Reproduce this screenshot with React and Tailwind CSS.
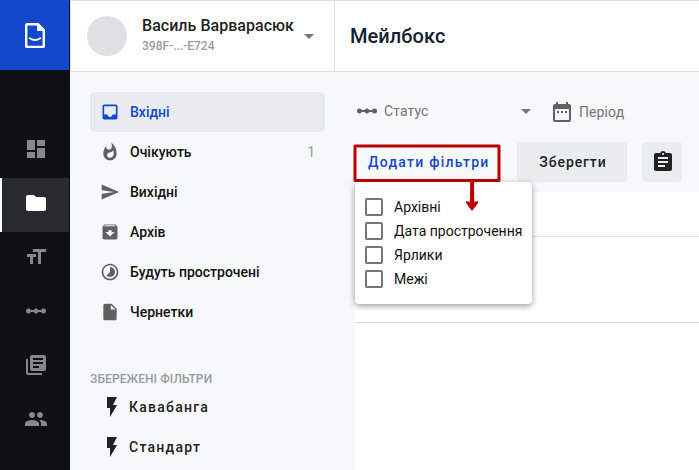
import {
  MdDashboard, MdFolder, MdFormatSize, MdLinearScale, MdLibraryBooks, MdPeople,
  MdInbox, MdWhatshot, MdSend, MdArchive, MdTimelapse, MdInsertDriveFile,
  MdFlashOn, MdDateRange, MdAssignment, MdArrowDropDown,
} from "react-icons/md";

const railItems = [
  { Icon: MdDashboard },
  { Icon: MdFolder, active: true },
  { Icon: MdFormatSize },
  { Icon: MdLinearScale },
  { Icon: MdLibraryBooks },
  { Icon: MdPeople },
];

const folders = [
  { label: "Вхідні", Icon: MdInbox, active: true },
  { label: "Очікують", Icon: MdWhatshot, count: 1 },
  { label: "Вихідні", Icon: MdSend },
  { label: "Архів", Icon: MdArchive },
  { label: "Будуть прострочені", Icon: MdTimelapse },
  { label: "Чернетки", Icon: MdInsertDriveFile },
];

const savedFilters = ["Кавабанга", "Стандарт"];
const filterOptions = ["Архівні", "Дата прострочення", "Ярлики", "Межі"];

function Logo() {
  return (
    <svg width="20" height="26" viewBox="0 0 20 26" fill="none">
      <path d="M2.2 1.2H13L18.8 7V23.2Q18.8 23.9 18.1 23.9H1.9Q1.2 23.9 1.2 23.2V2.2Q1.2 1.2 2.2 1.2Z" stroke="#fff" strokeWidth="2.4" strokeLinejoin="round" />
      <path d="M12 1L19 8H13Q12 8 12 7Z" fill="#fff" />
      <path d="M4.8 15.2Q10 19 15.2 15.2" stroke="#fff" strokeWidth="2" strokeLinecap="round" />
    </svg>
  );
}

function Rail() {
  return (
    <nav className="flex w-[70px] shrink-0 flex-col border-r border-[#0c1015] bg-[#0d1116]">
      <div className="mb-[54px] flex h-[70px] items-center justify-center bg-[#1348cc] pt-px pl-px">
        <Logo />
      </div>
      {railItems.map(({ Icon, active }, i) => (
        <div
          key={i}
          className={`flex h-[54px] items-center justify-center border-l-2 pb-1 ${
            active ? "border-white bg-[#272a2f] text-white" : "border-transparent text-[#86888a]"
          }`}
        >
          <Icon size={24} />
        </div>
      ))}
    </nav>
  );
}

function Header() {
  return (
    <header className="flex h-[72px] border-y border-l border-[#dcdfe2] bg-white">
      <div className="flex w-[264px] items-center border-r border-[#dcdfe2] pl-4">
        <div className="size-10 rounded-full bg-[#dde1e4]" />
        <div className="ml-[15px] w-[155px] whitespace-nowrap">
          <div className="text-[16px] font-medium leading-5 tracking-[0.03px] text-[#222]">Василь Варварасюк</div>
          <div className="text-[12px] font-medium leading-5 text-[#959ca5]">398F-...-E724</div>
        </div>
        <MdArrowDropDown size={24} className="text-[#757575]" />
      </div>
      <h1 className="flex items-center pl-[15px] text-[20px] font-medium tracking-[0.05px] text-[#14202e]">Мейлбокс</h1>
    </header>
  );
}

function Sidebar() {
  return (
    <aside className="w-[285px] shrink-0 bg-[#f7f8fa] pl-5 pr-[30px] pt-5">
      {folders.map(({ label, Icon, active, count }) => (
        <div
          key={label}
          className={`flex h-10 items-center rounded-[5px] pl-2.5 pr-2.5 text-[14px] font-medium ${
            active ? "bg-[#e8ebf0] text-[#1348cc]" : "text-[#111]"
          }`}
        >
          <Icon size={20} className={active ? "text-[#1348cc]" : "text-[#616161]"} />
          <span className="ml-2.5">{label}</span>
          {count && <span className="ml-auto font-normal text-[#9a9a9a]">{count}</span>}
        </div>
      ))}
      <div className="mt-[39px] h-4 text-[12px] font-medium leading-4 tracking-[0.1px] text-[#959ca5]">ЗБЕРЕЖЕНІ ФІЛЬТРИ</div>
      {savedFilters.map((name) => (
        <div key={name} className="flex h-10 items-center pl-2.5 text-[14px] font-medium tracking-[1.25px] text-[#222]">
          <MdFlashOn size={24} />
          <span className="ml-[5px]">{name}</span>
        </div>
      ))}
    </aside>
  );
}

function FilterMenu() {
  return (
    <div className="absolute left-0 top-[110px] h-[122px] w-[177px] rounded-[4px] bg-white pl-[7px] pt-[13px] shadow-[0_2px_6px_rgba(0,0,0,0.4)]">
      {filterOptions.map((option) => (
        <div key={option} className="flex h-6 items-center whitespace-nowrap text-[14px] text-[#111]">
          <span className="ml-[3px] size-[18px] rounded-[2px] border-2 border-[#757575]" />
          <span className="ml-[11px]">{option}</span>
        </div>
      ))}
    </div>
  );
}

function Callout() {
  return (
    <svg className="absolute left-[-2px] top-[71px]" width="150" height="70" viewBox="0 0 150 70">
      <rect x="2" y="3" width="144" height="34.5" fill="none" stroke="#b90000" strokeWidth="3" strokeLinejoin="round" />
      <path d="M117.2 38H121L121.3 59L124.6 58Q126 59.5 124.4 61L120.2 66.5Q119 68.5 117.8 66.5L113.8 61Q112 59.5 113.6 58L117 59Z" fill="#b90000" />
    </svg>
  );
}

function Content() {
  return (
    <main className="relative min-w-0 flex-1 bg-white">
      <div className="h-[120px] bg-[#f7f8fa]">
        <div className="flex h-[70px] items-center pt-2 text-[14px] text-[#757575]">
          <MdLinearScale size={24} className="text-[#616161]" />
          <span className="ml-[5px] w-[130px] tracking-[0.1px]">Статус</span>
          <MdArrowDropDown size={24} />
          <MdDateRange size={24} className="ml-3 mt-0.5 text-[#616161]" />
          <span className="ml-[5px] mt-0.5 tracking-[0.1px]">Період</span>
        </div>
        <div className="flex h-10 whitespace-nowrap text-[14px] font-medium">
          <button className="w-[147px] pl-[13px] text-left tracking-[1.25px] text-[#1348cc]">Додати фільтри</button>
          <button className="ml-[15px] w-[110px] rounded-[4px] bg-[#e9edf0] pl-0.5 tracking-[0.9px] text-[#222]">Зберегти</button>
          <button className="ml-[15px] flex w-10 items-center justify-center rounded-[4px] bg-[#e9edf0] pl-px text-[#222]">
            <MdAssignment size={24} />
          </button>
        </div>
      </div>
      <div className="h-[45px] border-b border-[#dfdfdf]" />
      <div className="h-[86px] border-b border-[#dfdfdf]" />
      <FilterMenu />
      <Callout />
    </main>
  );
}

export default function App() {
  return (
    <div className="flex h-[470px] w-[699px] overflow-hidden bg-white font-['Roboto',sans-serif]">
      <Rail />
      <div className="flex min-w-0 flex-1 flex-col">
        <Header />
        <div className="flex min-h-0 flex-1">
          <Sidebar />
          <Content />
        </div>
      </div>
    </div>
  );
}
